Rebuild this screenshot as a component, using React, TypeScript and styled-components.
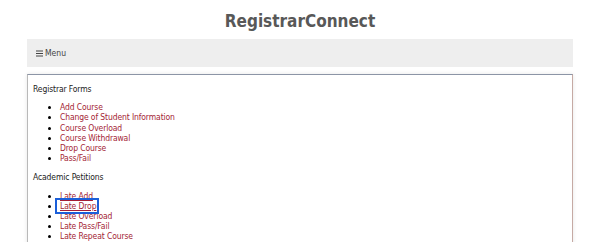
import styled, { createGlobalStyle } from 'styled-components';

const GlobalStyle = createGlobalStyle`
    html, body {
        margin: 0;
        padding: 0;
        background: #ffffff;
    }

    body {
        font-family: "DejaVu Sans Condensed", "DejaVu Sans", sans-serif;
        font-stretch: condensed;
        color: #222222;
    }
`;

const Page = styled.div`
    padding: 0 27px;
    overflow: hidden;
    height: 242px;
`;

const Title = styled.h1`
    margin: 11px 0 8px;
    font-size: 17px;
    line-height: 20px;
    font-weight: bold;
    text-align: center;
    color: #585858;
`;

const MenuBar = styled.div`
    display: flex;
    align-items: center;
    gap: 2px;
    height: 28px;
    padding-left: 9px;
    background-color: #eeeeee;
    font-size: 8.5px;
    color: #444444;
`;

const MenuIcon = styled.svg`
    width: 7px;
    height: 7px;
    display: block;
`;

const Panel = styled.div`
    margin-top: 7px;
    padding: 0 5px;
    border-top: 1px solid #8c95a6;
    border-left: 1px solid #b9b9b9;
    border-right: 1px solid #c6aaa4;
    box-shadow: 0 0 4px rgba(0, 0, 0, 0.1);
    font-size: 8.5px;
    line-height: 10.2px;
    letter-spacing: -0.12px;
    height: 400px;
`;

const Heading = styled.p`
    margin: 8.5px 0;
    color: #222222;
`;

const LinkList = styled.ul`
    margin: 8.5px 0;
    padding-left: 27px;
    list-style: disc;
    color: #000000;
`;

const Item = styled.li`
    margin: 0;
`;

const Link = styled.a<{ focused?: boolean; hovered?: boolean }>`
    color: #a41e35;
    text-decoration: ${props => (props.focused || props.hovered) ? 'underline' : 'none'};
    outline: ${props => props.focused ? '2px solid #1b5fd9' : 'none'};
    outline-offset: 1px;
    padding-left: ${props => props.focused ? '2px' : '0'};
    margin-left: ${props => props.focused ? '-2px' : '0'};
    cursor: pointer;
`;

const registrarForms = [
    'Add Course',
    'Change of Student Information',
    'Course Overload',
    'Course Withdrawal',
    'Drop Course',
    'Pass/Fail',
];

const academicPetitions = [
    'Late Add',
    'Late Drop',
    'Late Overload',
    'Late Pass/Fail',
    'Late Repeat Course',
];

export default function App() {
    return (
        <>
            <GlobalStyle />
            <Page>
                <Title>RegistrarConnect</Title>
                <MenuBar>
                    <MenuIcon viewBox="0 0 7 7">
                        <rect x="0" y="0.5" width="7" height="1" fill="#444" />
                        <rect x="0" y="3" width="7" height="1" fill="#444" />
                        <rect x="0" y="5.5" width="7" height="1" fill="#444" />
                    </MenuIcon>
                    <span>Menu</span>
                </MenuBar>
                <Panel>
                    <Heading>Registrar Forms</Heading>
                    <LinkList>
                        {registrarForms.map(name => (
                            <Item key={name}><Link>{name}</Link></Item>
                        ))}
                    </LinkList>
                    <Heading>Academic Petitions</Heading>
                    <LinkList>
                        {academicPetitions.map(name => (
                            <Item key={name}>
                                <Link hovered={name === 'Late Add'} focused={name === 'Late Drop'}>{name}</Link>
                            </Item>
                        ))}
                    </LinkList>
                </Panel>
            </Page>
        </>
    );
}
